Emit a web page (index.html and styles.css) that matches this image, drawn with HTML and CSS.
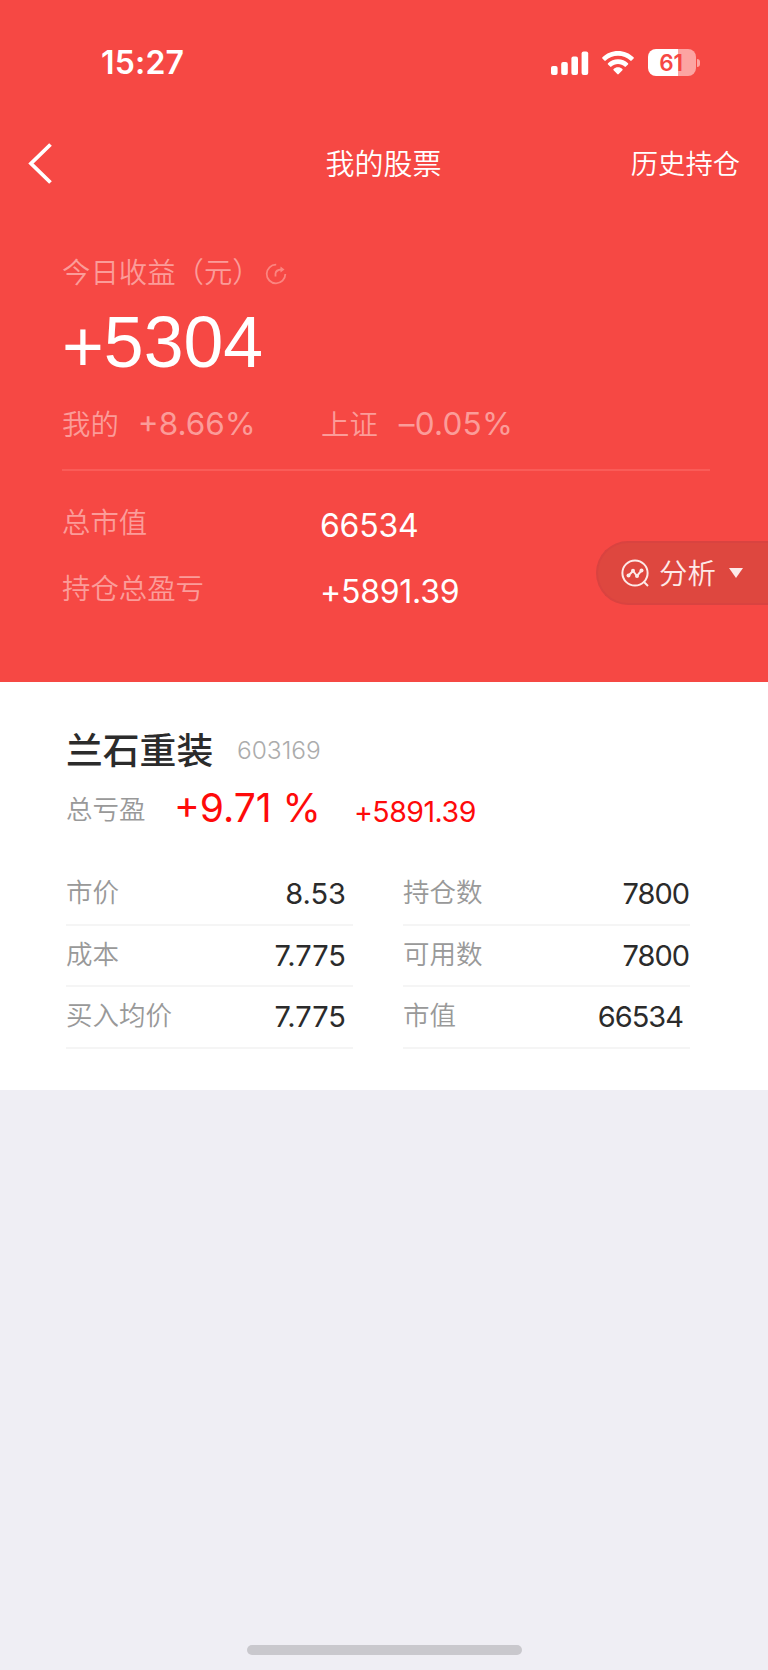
FILE: index.html
```html
<!DOCTYPE html>
<html lang="zh-CN">
<head>
    <meta charset="UTF-8">
    <title>我的股票</title>
    <link rel="stylesheet" href="styles.css">
</head>
<body>
    <div class="top">
        <div class="status-bar">
            <span class="time">15:27</span>
            <div class="status-icons">
                <svg class="signal" width="38" height="26" viewBox="0 0 38 26" fill="#fff">
                    <rect x="0" y="16" width="6.6" height="9" rx="2"/>
                    <rect x="10.2" y="12" width="6.6" height="13" rx="2"/>
                    <rect x="20.4" y="6.6" width="6.6" height="18.4" rx="2"/>
                    <rect x="30.6" y="1.4" width="6.6" height="23.6" rx="2"/>
                </svg>
                <svg class="wifi" width="32" height="26" viewBox="0 0 32 26" fill="#fff">
                    <path d="M16 1C9.9 1 4.4 3.4.4 7.3c-.4.4-.4.9 0 1.3l2 2c.4.4.9.4 1.3 0C6.9 7.6 11.2 5.8 16 5.8s9.1 1.8 12.3 4.8c.4.4.9.4 1.3 0l2-2c.4-.4.4-.9 0-1.3C27.600 3.400 22.100 1 16 1z"/>
                    <path d="M16 9.2c-3.9 0-7.4 1.5-10 4-.4.4-.4.9 0 1.3l2.1 2.1c.4.4.9.4 1.3 0 1.7-1.6 4-2.6 6.6-2.6s4.9 1 6.6 2.6c.4.4.9.4 1.3 0l2.1-2.1c.4-.4.4-.9 0-1.3-2.6-2.5-6.1-4-10-4z"/>
                    <path d="M16 17.3c-1.7 0-3.2.6-4.4 1.6-.4.4-.4.9 0 1.3l3.7 3.9c.4.4 1 .4 1.4 0l3.7-3.900c.4-.4.4-.9 0-1.300-1.200-1-2.700-1.600-4.400-1.600z"/>
                </svg>
                <div class="battery">
                    <span class="battery-body">61</span>
                    <span class="battery-cap"></span>
                </div>
            </div>
        </div>

        <div class="nav">
            <svg class="back" width="26" height="42" viewBox="0 0 26 42">
                <path d="M23.5 2.5L4 21.5L23.5 40.5" fill="none" stroke="#fff" stroke-width="3.8"/>
            </svg>
            <span class="nav-title">我的股票</span>
            <span class="nav-history">历史持仓</span>
        </div>

        <div class="summary">
            <div class="today">
                <span>今日收益（元）</span>
                <svg width="22" height="22" viewBox="0 0 22 22" fill="none" stroke="#fb8580" stroke-width="1.8">
                    <path d="M11.2 1.7A9.3 9.3 0 1 0 20.3 11"/>
                    <path d="M10.5 13.5V10.5Q11 6.8 16.5 6.5"/>
                    <path d="M15.5 3.5L19.5 6.5L15.5 9.5z" fill="#fb8580" stroke="none"/>
                </svg>
            </div>
            <div class="profit"><span class="plus">+</span>5304</div>
            <div class="compare">
                <div class="compare-item">
                    <span class="label">我的</span><span class="pct">+8.66%</span>
                </div>
                <div class="compare-item">
                    <span class="label">上证</span><span class="pct index">–0.05%</span>
                </div>
            </div>
            <div class="total">
                <span class="label">总市值</span><span class="total-num">66534</span>
            </div>
            <div class="total">
                <span class="label">持仓总盈亏</span><span class="total-num">+5891.39</span>
            </div>
        </div>

        <div class="analyse">
            <svg width="29" height="29" viewBox="0 0 29 29" fill="none" stroke="#fde9e8" stroke-width="2">
                <circle cx="14" cy="14" r="12.6"/>
                <path d="M22.5 22.5L27 27"/>
                <path d="M7.5 16.5L12 12L16 17L20.5 11.5"/>
                <g fill="#fde9e8" stroke="none">
                    <circle cx="7.5" cy="16.5" r="2"/>
                    <circle cx="12" cy="11.8" r="2"/>
                    <circle cx="16" cy="17" r="2"/>
                    <circle cx="20.5" cy="11.5" r="2"/>
                </g>
            </svg>
            <span>分析</span>
            <i class="arrow"></i>
        </div>
    </div>

    <div class="stock">
        <div class="stock-head">
            <span class="stock-name">兰石重装</span>
            <span class="stock-code">603169</span>
        </div>
        <div class="stock-profit">
            <span class="stock-label">总亏盈</span>
            <span class="rate">+9.71 %</span>
            <span class="amount">+5891.39</span>
        </div>
        <div class="grid">
            <div class="cell"><span>市价</span><b>8.53</b></div>
            <div class="cell right"><span>持仓数</span><b>7800</b></div>
            <div class="cell"><span>成本</span><b>7.775</b></div>
            <div class="cell right"><span>可用数</span><b>7800</b></div>
            <div class="cell"><span>买入均价</span><b>7.775</b></div>
            <div class="cell right value"><span>市值</span><b>66534</b></div>
        </div>
    </div>

    <div class="home-bar"></div>
</body>
</html>
```
FILE: styles.css
```css
* {
    box-sizing: border-box;
}

body {
    margin: 0;
    min-height: 1670px;
    display: flex;
    flex-direction: column;
    background-color: #efeef4;
    font-family: "Noto Sans CJK SC", sans-serif;
    font-weight: 350;
    white-space: nowrap;
}

svg {
    display: block;
    flex: none;
}

.top {
    position: relative;
    height: 682px;
    background-color: #f64844;
    color: #ffffff;
}

/* status bar */
.status-bar {
    display: flex;
    justify-content: space-between;
    align-items: center;
    height: 125px;
    padding: 0 68px 0 101px;
}

.time {
    font: 600 32px/40px Inter, sans-serif;
    letter-spacing: 0.2px;
}

.status-icons {
    display: flex;
    align-items: center;
}

.wifi {
    margin: 0 14px 0 13px;
}

.battery {
    display: flex;
    align-items: center;
}

.battery-body {
    width: 48px;
    height: 27px;
    padding-right: 2px;
    border-radius: 8px;
    background: linear-gradient(to right, #ffffff 30px, #fca4a2 30px);
    color: #f64844;
    font: 600 22.5px/27px Inter, sans-serif;
    letter-spacing: -0.3px;
    text-align: center;
}

.battery-cap {
    width: 3px;
    height: 8px;
    margin-left: 1px;
    border-radius: 0 3px 3px 0;
    background-color: #fca4a2;
}

/* nav */
.nav {
    display: grid;
    grid-template-columns: 1fr auto 1fr;
    align-items: center;
    height: 76px;
    padding: 0 28px 0 27px;
}

.nav-title {
    padding-bottom: 2px;
    font-size: 29px;
    line-height: 40px;
}

.nav-history {
    justify-self: end;
    padding-bottom: 2px;
    font-size: 27.3px;
    line-height: 40px;
}

/* summary */
.summary {
    padding: 50px 58px 0 62px;
}

.label {
    font-size: 28.4px;
    color: #fb9c99;
}

.today {
    display: flex;
    align-items: center;
    gap: 4px;
    height: 40px;
    font-size: 28.4px;
    line-height: 40px;
    color: #fb9c99;
}

.today svg {
    margin-top: 6px;
}

.profit {
    height: 101px;
    font: 400 71.6px/102px "Liberation Sans", sans-serif;
}

.plus {
    vertical-align: -4px;
    line-height: 1;
}

.compare {
    display: flex;
    height: 79px;
    margin-bottom: 22px;
    border-bottom: 2px solid #fa5c58;
    line-height: 62px;
}

.compare-item {
    display: flex;
    width: 259px;
}

.pct {
    margin-left: 19px;
    font: 400 31.5px/64px Inter, sans-serif;
    color: #fb9c99;
}

.pct.index {
    margin-left: 21px;
    letter-spacing: 0.2px;
}

.total {
    display: flex;
    height: 66px;
    line-height: 56px;
}

.total .label {
    width: 258px;
}

.total-num {
    font: 400 32px/66px Inter, sans-serif;
    letter-spacing: -0.25px;
}

/* floating button on the right edge */
.analyse {
    position: absolute;
    right: 0;
    top: 541px;
    display: flex;
    align-items: center;
    width: 172px;
    height: 64px;
    padding-left: 23px;
    border: 2px solid #d94340;
    border-right: none;
    border-radius: 32px 0 0 32px;
    background-color: #de473f;
    color: #fde9e8;
    font-size: 28.4px;
}

.analyse span {
    margin: 0 13px 4px 9px;
}

.arrow {
    border-top: 10px solid #fde9e8;
    border-left: 7px solid transparent;
    border-right: 7px solid transparent;
}

/* stock card */
.stock {
    height: 408px;
    padding: 41px 78px 0 66px;
    background-color: #ffffff;
}

.stock-head {
    display: flex;
    height: 56px;
    line-height: 50px;
}

.stock-name {
    width: 171px;
    font-size: 36.8px;
    font-weight: 500;
    color: #2b2b2b;
}

.stock-code {
    font: 300 24.5px/54px Inter, sans-serif;
    color: #acacac;
}

.stock-profit {
    display: flex;
    height: 85px;
}

.stock-label {
    width: 108px;
    font-size: 26.5px;
    line-height: 58px;
    color: #999999;
}

.rate {
    width: 180px;
    font: 400 39px/57px Inter, sans-serif;
    color: #fe0a0a;
}

.amount {
    font: 400 28.5px/65px Inter, sans-serif;
    letter-spacing: -0.5px;
    color: #fe0a0a;
}

.grid {
    display: grid;
    grid-template-columns: 287px 287px;
    column-gap: 50px;
}

.cell {
    display: flex;
    justify-content: space-between;
    height: 61.5px;
    padding-right: 7px;
    border-bottom: 2px solid #f5f5f5;
    font-size: 26.5px;
    line-height: 54px;
    color: #999999;
}

.cell b {
    font: 400 29px/60px Inter, sans-serif;
    color: #2b2b2b;
}

.cell.right {
    padding-right: 1px;
}

.cell.right b {
    letter-spacing: -1px;
}

.cell.value {
    padding-right: 7px;
}

.home-bar {
    width: 275px;
    height: 10px;
    margin: auto auto 15px 247px;
    border-radius: 5px;
    background-color: #c9c8cd;
}
```
